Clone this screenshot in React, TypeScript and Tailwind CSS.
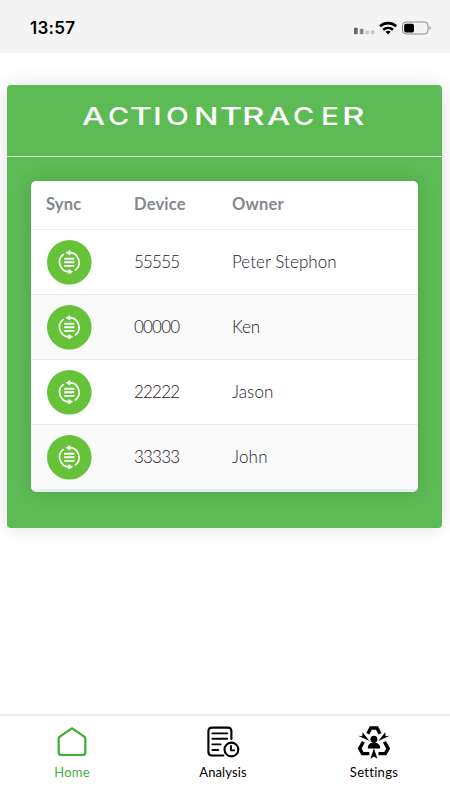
import React from 'react';

const devices = [
  { id: '55555', owner: 'Peter Stephon', spacing: 'tracking-[0.05px]' },
  { id: '00000', owner: 'Ken', spacing: 'tracking-[-0.1px]' },
  { id: '22222', owner: 'Jason', spacing: 'tracking-[0.1px]' },
  { id: '33333', owner: 'John', spacing: 'tracking-[0.2px]' },
];

const title: { ch: string; w: string; scale: string }[] = [
  { ch: 'A', w: 'w-[25.5px]', scale: 'scale-x-[1.36]' },
  { ch: 'C', w: 'w-[22.5px]', scale: 'scale-x-[1.2]' },
  { ch: 'T', w: 'w-[22.5px]', scale: 'scale-x-[1.42]' },
  { ch: 'I', w: 'w-[13.3px]', scale: 'scale-x-[1.35]' },
  { ch: 'O', w: 'w-[28.5px]', scale: 'scale-x-[1.24]' },
  { ch: 'N', w: 'w-[26px]', scale: 'scale-x-[1.35]' },
  { ch: 'T', w: 'w-[22px]', scale: 'scale-x-[1.42]' },
  { ch: 'R', w: 'w-[25.2px]', scale: 'scale-x-[1.45]' },
  { ch: 'A', w: 'w-[26px]', scale: 'scale-x-[1.36]' },
  { ch: 'C', w: 'w-[28px]', scale: 'scale-x-[1.2]' },
  { ch: 'E', w: 'w-[20.8px]', scale: 'scale-x-[1.24]' },
  { ch: 'R', w: 'w-[24px]', scale: 'scale-x-[1.45]' },
];

function StatusIcons() {
  return (
    <svg width="80" height="16" viewBox="0 0 80 16">
      <g>
        <rect x="1" y="7.8" width="3.7" height="6.4" rx="0.7" fill="#686868" />
        <rect x="6.8" y="8.8" width="3.7" height="5.4" rx="0.7" fill="#858585" />
        <rect x="12.3" y="10.5" width="3.8" height="3.7" rx="1" fill="#c6c6c6" />
        <rect x="17.8" y="10.5" width="3.8" height="3.7" rx="1" fill="#c6c6c6" />
      </g>
      <g fill="none" stroke="#000" strokeWidth="2.6">
        <path d="M27 6.2a12.2 12.2 0 0 1 16.2 0" />
        <path d="M30.2 9.8a7.5 7.5 0 0 1 9.8 0" />
      </g>
      <path d="M32.5 11.8q2.6-1.9 5.2 0L35.1 14.4z" fill="#000" />
      <rect x="49.5" y="2" width="25.5" height="12" rx="3.5" fill="none" stroke="#8a8a8a" />
      <rect x="51.2" y="3.7" width="9.8" height="8.8" rx="1.8" fill="#000" />
      <path d="M76.6 6.2q2.3 1.8 0 3.8z" fill="#777" />
    </svg>
  );
}

function SyncButton() {
  return (
    <svg className="block" width="46" height="46" viewBox="-1 -1 46 46">
      <circle cx="22.3" cy="22.3" r="22.3" fill="#65c239" />
      <g fill="none" stroke="#fff" strokeWidth="1.7">
        <path d="M16.8 14.1A9.7 9.7 0 0 0 22.3 31.8" />
        <path d="M22.3 12.7A9.7 9.7 0 0 1 27.8 30.4" />
        <path d="M17.2 18.7h10.2M17.2 22.3h10.2M17.2 25.9h10.2" strokeWidth="1.9" />
      </g>
      <path d="M18.4 12.7 23.2 10v5.4zM26.2 31.8 21.4 29.1v5.4z" fill="#fff" />
    </svg>
  );
}

function HomeIcon() {
  return (
    <svg width="34" height="34" viewBox="0 0 34 34" fill="none" stroke="#3cb034" strokeWidth="2.2" strokeLinejoin="round">
      <path d="M17 3.4Q17.5 3.4 18 3.8L29.2 11.7Q30.3 12.5 30.3 14V27.2Q30.3 30 27.5 30H6.5Q3.7 30 3.7 27.2V14Q3.7 12.5 4.8 11.7L16 3.8Q16.5 3.4 17 3.4Z" />
    </svg>
  );
}

function AnalysisIcon() {
  return (
    <svg width="34" height="34" viewBox="0 0 34 34" fill="none" stroke="#000" strokeWidth="2.1" strokeLinecap="round">
      <path d="M25.4 14V6Q25.4 2.6 22 2.6H5.8Q2.4 2.6 2.4 6V27Q2.4 30.5 5.8 30.5H17.3" />
      <path d="M6.4 8.4H21.2M6.4 13.7H21.2M6.4 19.4H14.6M6.4 25H12.2" strokeWidth="1.9" />
      <circle cx="25.4" cy="24.5" r="6.9" />
      <path d="M25 20.3V25.4H29" strokeLinecap="butt" strokeWidth="1.9" />
    </svg>
  );
}

function SettingsIcon() {
  return (
    <svg width="34" height="34" viewBox="0 0 34 34">
      <g fill="none" stroke="#000" strokeWidth="3.4">
        <path d="M10.8 8.7 13.8 3H20L23 8.7" />
        <path d="M6.4 16.7 2.6 23.6 5.5 28.6H12.3" />
        <path d="M27.4 16.7 31.2 23.6 28.3 28.6H21.5" />
      </g>
      <circle cx="16.9" cy="14.3" r="3.5" fill="#000" />
      <path d="M10.8 23.5Q10.8 18.2 15.5 17.8V16H18.3V17.8Q23.2 18.2 23.2 23.5Z" fill="#000" />
      <path d="M1.1 10.8 5.2 11.2 5.6 7.2 12.5 16.1ZM32.7 10.8 28.6 11.2 28.2 7.2 21.3 16.1ZM16.9 23.3 20.4 33.8 16.9 31.6 13.4 33.8Z" fill="#000" />
    </svg>
  );
}

export default function App() {
  return (
    <div className="flex h-[800px] w-[450px] flex-col overflow-hidden bg-white font-['Lato',sans-serif]">
      <header className="flex h-[53px] w-full shrink-0 justify-between bg-[#f4f4f4] pl-[30px] pr-[17px] pt-[20px]">
        <span className="font-['Inter',sans-serif] text-[17px] leading-[17px] font-semibold tracking-[0.3px] text-black">13:57</span>
        <StatusIcons />
      </header>

      <main className="flex-1 pl-[7px] pr-[8px] pt-[32px]">
        <section className="h-[443px] rounded-[4px] bg-[#5cbb54] shadow-[0_0_20px_rgba(0,0,0,0.12)]">
          <div className="flex h-[72px] border-b-[1.5px] border-[#e0f2de] pl-[75px] pt-[17px]">
            <h1 className="flex font-['Inter',sans-serif] text-[24px] leading-[30px] font-medium text-white">
              {title.map((letter, i) => (
                <span key={i} className={letter.w}>
                  <span className={`inline-block origin-left ${letter.scale}`}>{letter.ch}</span>
                </span>
              ))}
            </h1>
          </div>

          <div className="mt-[24px] ml-[24px] h-[311px] w-[387px] overflow-hidden rounded-[5px] border-b-[2px] border-[#e7eaf3] bg-white shadow-[0_0_20px_rgba(0,0,0,0.13)]">
            <div className="grid h-[48.5px] grid-cols-[88px_98px_1fr] items-center border-b border-[#eceef5] pl-[15px] text-[16.5px] font-bold text-[#85888f]">
              <span className="tracking-[0.2px]">Sync</span>
              <span className="tracking-[0.2px]">Device</span>
              <span className="tracking-[0.2px]">Owner</span>
            </div>
            {devices.map((device) => (
              <div key={device.id} className="grid h-[65.2px] grid-cols-[88px_98px_1fr] items-center border-b border-[#e8ebf3] pl-[15px] text-[17px] font-light text-[#1c2027] odd:bg-[#fafafa] even:bg-white">
                <SyncButton />
                <span className="tracking-[-0.8px]">{device.id}</span>
                <span className={device.spacing}>{device.owner}</span>
              </div>
            ))}
          </div>
        </section>
      </main>

      <nav className="flex h-[86px] shrink-0 border-t-[2px] border-[#ececec] bg-white pt-[9px] text-[13px] leading-[18px] text-black">
        <div className="flex w-[144px] flex-col items-center gap-[4px] text-[#49ad40]">
          <HomeIcon />
          <span className="tracking-[0.2px]">Home</span>
        </div>
        <div className="flex w-[158px] flex-col items-center gap-[4px]">
          <AnalysisIcon />
          <span className="tracking-[0.1px]">Analysis</span>
        </div>
        <div className="flex w-[144px] flex-col items-center gap-[4px]">
          <SettingsIcon />
          <span className="tracking-[0.3px]">Settings</span>
        </div>
      </nav>
    </div>
  );
}
